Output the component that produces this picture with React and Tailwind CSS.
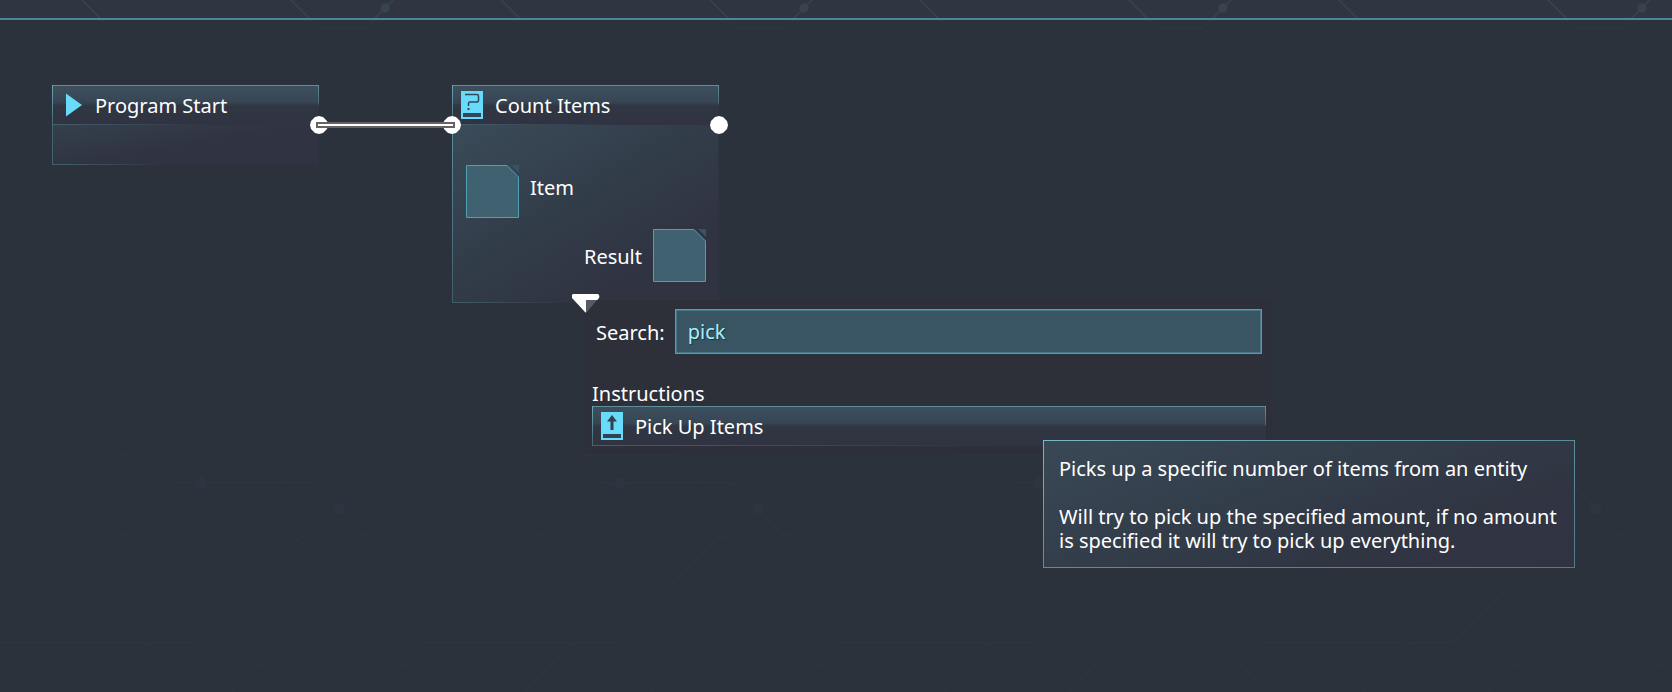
import React from "react";

const HEADER_FILL =
  "bg-[linear-gradient(to_bottom,#3d4f5e,#384654_42%,#303643_52%,#303442)]";
const HEADER_EDGE =
  "bg-[linear-gradient(to_bottom,#6fa9b6,#44646f),linear-gradient(to_right,#465f6c,#303442_60%),linear-gradient(to_bottom,#5f909c,#4b6471_46%,#303442_52%)] bg-[length:1px_100%,100%_1px,100%_100%] bg-[position:0_0,0_100%,0_0] bg-no-repeat";

function BackgroundLines() {
  return (
    <svg className="absolute inset-0 h-full w-full" aria-hidden="true">
      <defs>
        <pattern id="circuit" width="419" height="700" patternUnits="userSpaceOnUse">
          <g fill="none" stroke="#35434d" strokeWidth="1.500">
            <path d="M82 0l20 20M291 0l20 20M373 20l20-20" />
          </g>
          <circle cx="385" cy="8" r="4.500" fill="#37444f" />
        </pattern>
        <pattern id="circuit-faint" width="419" height="700" patternUnits="userSpaceOnUse">
          <path
            d="M102 20l15 17M311 20l7 8h48l7-8M103 438l18 18h136l27 27M0 536h124l52-53h138l51 53M419 536H301L196 643H0M152 643l-46 49M232 692l26-28h146l24 28"
            fill="none"
            stroke="#2d3640"
            strokeWidth="1"
          />
          <g fill="#2d3640">
            <circle cx="201" cy="483" r="5" />
            <circle cx="339" cy="509" r="5" />
          </g>
        </pattern>
      </defs>
      <rect width="100%" height="18" fill="url(#circuit)" />
      <rect y="20" width="100%" height="100%" fill="url(#circuit-faint)" />
    </svg>
  );
}

function PlayIcon() {
  return (
    <svg className="h-7 w-6" viewBox="0 0 24 28" aria-hidden="true">
      <path d="M6 2.500L22 14L6 25.500Z" fill="#67dbf9" />
    </svg>
  );
}

function CountIcon() {
  return (
    <svg className="h-7 w-6" viewBox="0 0 24 28" aria-hidden="true">
      <path d="M1 0h22v28H1z" fill="#67dbf9" />
      <path d="M5 3.500h12q1.500 0 1.500 1.500v4.500q0 1.500-1.500 1.500h-7q-1.500 0-1.500 1.500V15" fill="none" stroke="#33475a" strokeWidth="1.500" />
      <path d="M7.500 17h2v2h-2zM3 22h18v4H3z" fill="#33475a" />
    </svg>
  );
}

function PickUpIcon() {
  return (
    <svg className="h-7 w-6" viewBox="0 0 24 28" aria-hidden="true">
      <path d="M1 0h22v28H1z" fill="#67dbf9" />
      <path d="M12 3l5 6.500h-3.500V18h-3V9.500H7zM3 22h18v4H3z" fill="#33404f" />
    </svg>
  );
}

function Slot({ label }) {
  return (
    <button type="button" aria-label={label} className="h-[53px] w-[53px]">
      <svg className="h-full w-full" viewBox="0 0 53 53" aria-hidden="true">
        <path d="M.5 .5H41L52.500 12V52.500H.5z" fill="#3f6170" stroke="#4f9fb5" />
        <path d="M45 0h8v8z" fill="#3b5361" />
      </svg>
    </button>
  );
}

function Port({ className }) {
  return (
    <svg className={`absolute h-[18px] w-[18px] ${className}`} viewBox="0 0 18 18" aria-hidden="true">
      <path d="M9 0l4 1 4 4 1 4-1 4-4 4-4 1-4-1-4-4-1-4 1-4 4-4z" fill="#fff" />
    </svg>
  );
}

function NodeHeader({ icon, title }) {
  return (
    <header className={`h-10 p-px ${HEADER_EDGE}`}>
      <div className={`flex h-full items-center gap-[11px] pl-[7px] ${HEADER_FILL}`}>
        {icon}
        <h2 className="pt-[2px]">{title}</h2>
      </div>
    </header>
  );
}

export default function App() {
  return (
    <div className="relative flex min-h-screen flex-col overflow-hidden bg-[#2c323b] font-['Noto_Sans',sans-serif] text-[20px] leading-6 text-white">
      <div className="h-5 border-b-2 border-[#4a8798] bg-[#303641]" />
      <BackgroundLines />
      <main className="relative flex-1">
        <section className="absolute left-[52px] top-[65px] w-[267px]">
          <NodeHeader icon={<PlayIcon />} title="Program Start" />
          <div className="h-10 bg-[linear-gradient(to_right,#44636f,#303442_40%)] pb-px pl-px">
            <div className="h-full bg-[linear-gradient(170deg,#34404d,#303442_50%)]" />
          </div>
          <Port className="-right-[9px] top-[31px]" />
        </section>

        <section className="absolute left-[452px] top-[65px] w-[267px]">
          <NodeHeader icon={<CountIcon />} title="Count Items" />
          <div className="bg-[linear-gradient(135deg,#5b8f9d,#3f5663_45%,#303442_65%)] px-px pb-px">
            <div className="flex flex-col gap-[11px] bg-[linear-gradient(150deg,#3b4b59,#333e4b_40%,#303442_75%)] pb-5 pl-[13px] pr-3 pt-10">
              <div className="flex items-center gap-[11px]">
                <Slot label="Choose item" />
                <span className="pb-2">Item</span>
              </div>
              <div className="flex items-center justify-end gap-[11px]">
                <span className="pt-[3px]">Result</span>
                <Slot label="Choose result" />
              </div>
            </div>
          </div>
          <Port className="-left-[9px] top-[31px]" />
          <Port className="-right-[9px] top-[31px]" />
        </section>

        <div className="absolute left-[316px] top-[102px] h-[6px] w-[139px] border-2 border-[#656262] bg-white" />

        <svg className="absolute left-[572px] top-[274px] h-5 w-7" viewBox="0 0 28 20" aria-hidden="true">
          <path d="M1 0h25q2 1 1 4L15 18q-1 1-2 0L0 4Q-1 1 1 0z" fill="#fff" />
        </svg>

        <section className="absolute left-[586px] top-[280px] w-[686px] bg-[#2d2f39] px-[6px] pb-2 pt-[9px]">
          <svg className="absolute left-0 top-0 h-[14px] w-[14px]" viewBox="0 0 14 14" aria-hidden="true">
            <path d="M0 0h11L1 12l-1 .5z" fill="#565a65" />
          </svg>
          <div className="flex items-center gap-[10px] pl-1 pr-1">
            <label htmlFor="search" className="pt-[2px]">Search:</label>
            <input
              id="search"
              type="text"
              defaultValue="pick"
              className="h-[45px] min-w-0 flex-1 border border-[#4f9fb5] bg-[#395462] px-3 text-[#a1f0fc] shadow-[inset_0_0_0_1px_#42788a] outline-none [text-shadow:1px_1px_1px_#203039]"
            />
          </div>
          <h3 className="pt-7">Instructions</h3>
          <button type="button" className={`block h-10 w-full p-px text-left ${HEADER_EDGE}`}>
            <span className={`flex h-full items-center gap-[11px] pl-[7px] ${HEADER_FILL}`}>
              <PickUpIcon />
              <span className="pt-[2px]">Pick Up Items</span>
            </span>
          </button>
        </section>

        <div
          role="tooltip"
          className="absolute left-[1043px] top-[420px] w-[532px] bg-[linear-gradient(to_bottom_right,#78b8c4,#5d8d9b_50%,#587887)] p-px"
        >
          <div className="bg-[linear-gradient(160deg,#3a4856,#343f4c_35%,#303542_70%,#303442)] px-[15px] pb-[14px] pt-4">
            <p>Picks up a specific number of items from an entity</p>
            <p className="mt-6">
              Will try to pick up the specified amount, if no amount
              <br />
              is specified it will try to pick up everything.
            </p>
          </div>
        </div>
      </main>
    </div>
  );
}
